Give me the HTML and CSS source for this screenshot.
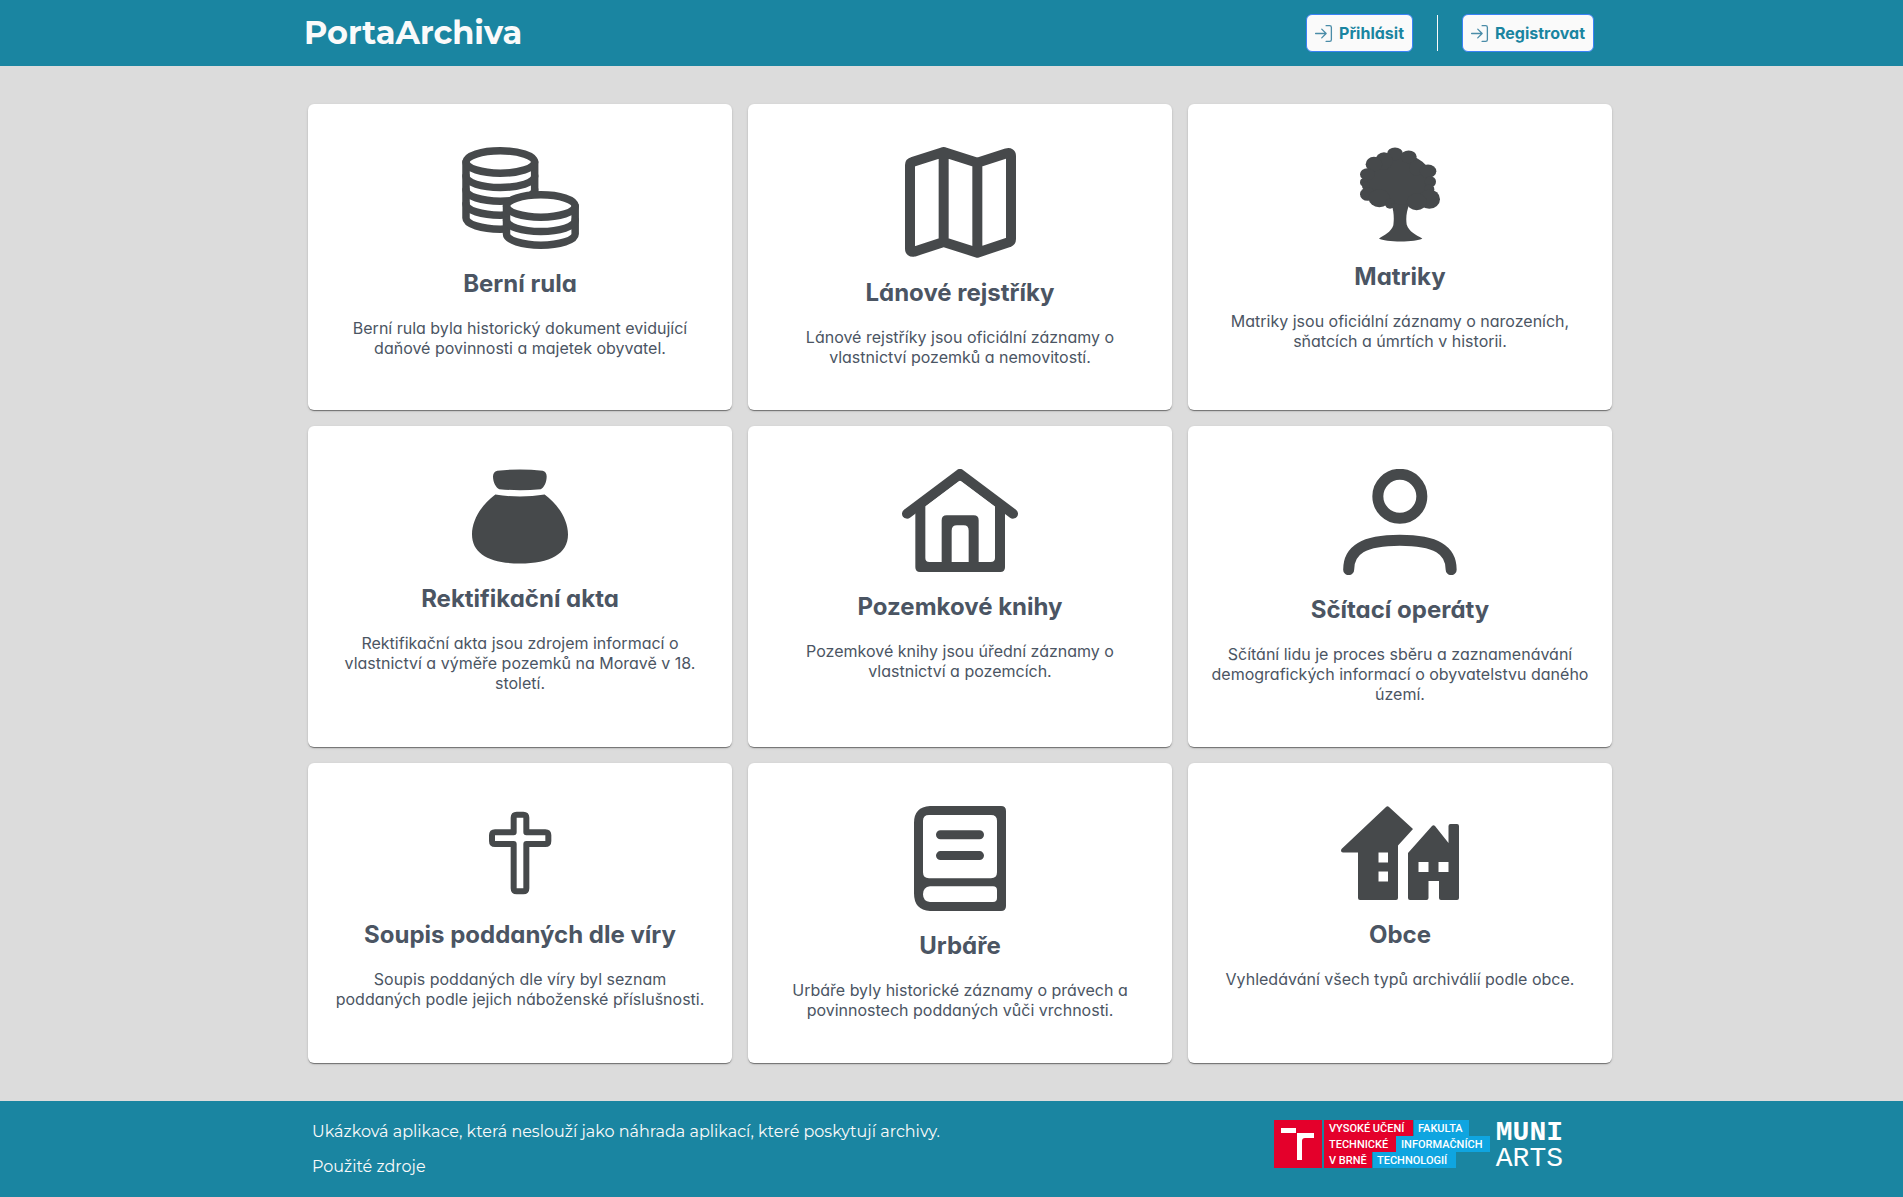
FILE: index.html
```html
<!DOCTYPE html>
<html lang="cs">
<head>
<meta charset="utf-8">
<meta name="viewport" content="width=device-width, initial-scale=1">
<title>PortaArchiva</title>
<link rel="stylesheet" href="styles.css">
</head>
<body>
<header class="header">
  <div class="wrap header-inner">
    <a class="brand" href="#">PortaArchiva</a>
    <nav class="actions">
      <button class="btn" type="button">
        <svg class="btn-icon" viewBox="0 0 24 24" aria-hidden="true"><path d="M15 3h4a2 2 0 0 1 2 2v14a2 2 0 0 1-2 2h-4M10 17l5-5-5-5M15 12H3"/></svg>
        Přihlásit
      </button>
      <span class="divider"></span>
      <button class="btn" type="button">
        <svg class="btn-icon" viewBox="0 0 24 24" aria-hidden="true"><path d="M15 3h4a2 2 0 0 1 2 2v14a2 2 0 0 1-2 2h-4M10 17l5-5-5-5M15 12H3"/></svg>
        Registrovat
      </button>
    </nav>
  </div>
</header>

<main class="wrap main">
  <a class="card" href="#">
    <svg width="117" height="102" viewBox="486 141 350 306" aria-hidden="true">
      <g class="line" stroke-width="22.500">
        <path d="M497.500 186V354A103 33.500 0 0 0 703.500 354V186"/>
        <ellipse cx="600.500" cy="186" rx="103" ry="33.500"/>
        <path d="M497.500 229A103 33.500 0 0 0 703.500 229M497.500 270A103 33.500 0 0 0 703.500 270M497.500 312A103 33.500 0 0 0 703.500 312"/>
        <path class="paper" d="M619 318A103 33.500 0 0 1 825 318V402A103 33.500 0 0 1 619 402Z"/>
        <path d="M619 318A103 33.500 0 0 0 825 318M619 361A103 33.500 0 0 0 825 361"/>
      </g>
    </svg>
    <h2>Berní rula</h2>
    <p>Berní rula byla historický dokument evidující daňové povinnosti a majetek obyvatel.</p>
  </a>
  <a class="card" href="#">
    <svg width="111" height="111" viewBox="495 141 333 333" aria-hidden="true">
      <path class="line" stroke-width="30" d="M510 195Q510 188 517 186L611 156L712 188L800 160Q813 157 813 168V417Q813 424 806 427L712 458L611 426L522 455Q510 457 510 446ZM611 156V426M712 188V458"/>
    </svg>
    <h2>Lánové rejstříky</h2>
    <p>Lánové rejstříky jsou oficiální záznamy o vlastnictví pozemků a nemovitostí.</p>
  </a>
  <a class="card" href="#">
    <svg width="80" height="95" viewBox="540 141 240 282" aria-hidden="true">
      <g class="solid">
        <ellipse cx="655" cy="240" rx="102" ry="80"/>
        <ellipse cx="645" cy="160" rx="24" ry="19"/><ellipse cx="686" cy="169" rx="24" ry="19"/>
        <circle cx="612" cy="181" r="26"/><ellipse cx="582" cy="191" rx="25" ry="22"/>
        <ellipse cx="562" cy="221" rx="22" ry="18"/><circle cx="552" cy="245" r="12"/><circle cx="558" cy="256" r="12"/>
        <ellipse cx="563" cy="281" rx="23" ry="20"/><ellipse cx="598" cy="293" rx="32" ry="27"/>
        <circle cx="630" cy="310" r="15"/><circle cx="710" cy="202" r="23"/>
        <ellipse cx="744" cy="212" rx="25" ry="20"/><circle cx="751" cy="244" r="17"/><circle cx="748" cy="266" r="15"/>
        <ellipse cx="748" cy="296" rx="32" ry="29"/><ellipse cx="710" cy="304" rx="30" ry="25"/>
        <path d="M634 310C643 335 642 360 640 374C633 395 612 404 597 414C615 426 709 426 727 414C706 402 688 395 680 372C677 352 680 330 688 312Z"/>
      </g>
    </svg>
    <h2>Matriky</h2>
    <p>Matriky jsou oficiální záznamy o narozeních, sňatcích a úmrtích v historii.</p>
  </a>
  <a class="card" href="#">
    <svg width="96" height="95" viewBox="516 177 288 282" aria-hidden="true">
      <path class="solid" d="M592 181Q660 173 728 181Q740 185 740 198C740 215 732 232 722 236Q660 242 598 236C588 232 579 215 579 198Q579 185 592 181ZM586 252Q660 264 734 252C775 282 804 328 804 372C804 430 750 459 660 459C570 459 516 430 516 372C516 328 545 282 586 252Z"/>
    </svg>
    <h2>Rektifikační akta</h2>
    <p>Rektifikační akta jsou zdrojem informací o vlastnictví a výměře pozemků na Moravě v 18. století.</p>
  </a>
  <a class="card" href="#">
    <svg width="116" height="103" viewBox="486 177 348 309" aria-hidden="true">
      <path class="line" stroke-width="30" d="M501 311L660 192L819 311"/>
      <path class="solid" fill-rule="evenodd" d="M526 300V472Q526 486 540 486H781Q795 486 795 472V300L660 195ZM556 288V444Q556 456 568 456H605V331Q605 316 620 316H701Q716 316 716 331V456H752Q765 456 765 444V288L668 215Q660 210 652 215ZM635 456V362Q635 346 651 346H671Q686 346 686 362V456Z"/>
    </svg>
    <h2>Pozemkové knihy</h2>
    <p>Pozemkové knihy jsou úřední záznamy o vlastnictví a pozemcích.</p>
  </a>
  <a class="card" href="#">
    <svg width="114" height="106" viewBox="489 177 341 318" aria-hidden="true">
      <g class="line" stroke-width="33">
        <circle cx="659" cy="259" r="66"/>
        <path d="M505.500 479C505.500 420 550 391 659 391C768 391 813 420 813 479"/>
      </g>
    </svg>
    <h2>Sčítací operáty</h2>
    <p>Sčítání lidu je proces sběru a zaznamenávání demografických informací o obyvatelstvu daného území.</p>
  </a>
  <a class="card" href="#">
    <svg width="94" height="94" viewBox="519 168 282 282" aria-hidden="true">
      <path class="line" stroke-width="18" d="M650 194h20q9 0 9 9V247H736q9 0 9 9v17q0 9-9 9H679V415q0 9-9 9h-20q-9 0-9-9V282H585q-9 0-9-9v-17q0-9 9-9H641V203q0-9 9-9z"/>
    </svg>
    <h2>Soupis poddaných dle víry</h2>
    <p>Soupis poddaných dle víry byl seznam poddaných podle jejich náboženské příslušnosti.</p>
  </a>
  <a class="card" href="#">
    <svg width="92" height="105" viewBox="914 806 92 106" preserveAspectRatio="none" aria-hidden="true">
      <path class="solid" fill-rule="evenodd" d="M930 806H1001Q1006 806 1006 811V907Q1006 912 1001 912H930Q914 911 914 894V823Q914 807 930 806ZM929 815H991Q997 815 997 821V873Q997 879 991 879H929Q923 879 923 873V821Q923 815 929 815ZM930 887H993Q997 887 997 891V899Q997 903 993 903H930Q923 902 923 895Q923 888 930 887Z"/>
      <path class="line" stroke-width="9" d="M940.500 835H979.500M940.500 856H979.500"/>
    </svg>
    <h2>Urbáře</h2>
    <p>Urbáře byly historické záznamy o právech a povinnostech poddaných vůči vrchnosti.</p>
  </a>
  <a class="card" href="#">
    <svg width="118" height="94" viewBox="1341 806 118 94" aria-hidden="true">
      <path class="solid" fill-rule="evenodd" d="M1386 807Q1387.500 805.500 1389 807L1413 829L1398 845.500V898Q1398 900 1396 900H1360Q1358 900 1358 898V852.500H1343Q1340 852 1341.500 849ZM1378.500 852.500V862.500H1388V852.500ZM1378.500 871.500V881.500H1388V871.500Z"/>
      <path class="solid" fill-rule="evenodd" d="M1408 853L1432 826Q1433.500 824.500 1435 826L1448.500 843V826Q1448.500 824 1450.500 824H1457Q1459 824 1459 826V898Q1459 900 1457 900H1441Q1439 900 1439 898V881H1428.500V898Q1428.500 900 1426.500 900H1410Q1408 900 1408 898ZM1418.500 862V872H1428.500V862ZM1438.500 862V872H1448.500V862Z"/>
    </svg>
    <h2>Obce</h2>
    <p>Vyhledávání všech typů archiválií podle obce.</p>
  </a>
</main>

<footer class="footer">
  <div class="wrap footer-inner">
    <div class="notes">
      <p>Ukázková aplikace, která neslouží jako náhrada aplikací, které poskytují archivy.</p>
      <a href="#">Použité zdroje</a>
    </div>
    <div class="logos">
      <svg class="vut" width="216" height="48" viewBox="0 0 216 48" role="img" aria-label="Vysoké učení technické v Brně, Fakulta informačních technologií">
        <path fill="#e4002b" d="M0 0h48v48H0zM50 0h89v16H50zM50 16h72v16H50zM50 32h48v16H50z"/>
        <path fill="#0fa5e0" d="M140 0h55v16h-55zM122 16h94v16h-94zM99 32h83v16H99z"/>
        <path fill="#fff" d="M7 8h15v5h18v5h-9q-3 0-3 3v19h-5V13H7z"/>
        <path fill="#e4002b" d="M22 13h1v5h-1z"/>
        <g class="vut-text">
          <text x="55" y="12">VYSOKÉ UČENÍ</text><text x="144" y="12">FAKULTA</text>
          <text x="55" y="28">TECHNICKÉ</text><text x="127" y="28">INFORMAČNÍCH</text>
          <text x="55" y="44">V BRNĚ</text><text x="103" y="44">TECHNOLOGIÍ</text>
        </g>
      </svg>
      <div class="muni"><strong>MUNI</strong><span>ARTS</span></div>
    </div>
  </div>
</footer>
</body>
</html>
```
FILE: styles.css
```css
:root {
  --teal: #1a85a1;
  --ink: #46494b;
  --slate: #4b5563;
  --light: #fafafa;
}

* {
  box-sizing: border-box;
}

body {
  margin: 0;
  min-height: 100vh;
  display: flex;
  flex-direction: column;
  background: #dcdcdc;
  color: var(--slate);
  font: 16px/20px Inter, sans-serif;
}

a {
  color: inherit;
  text-decoration: none;
}

.wrap {
  width: 100%;
  max-width: 1321px;
  margin: 0 auto;
}

.header,
.footer {
  background: var(--teal);
  color: var(--light);
  font-family: Montserrat, Inter, sans-serif;
}

.header-inner {
  display: flex;
  align-items: center;
  justify-content: space-between;
  min-height: 66px;
  padding: 0 18px 0 13px;
}

.brand {
  font-size: 32px;
  line-height: 40px;
  font-weight: 700;
}

.actions {
  display: flex;
  align-items: center;
  gap: 24px;
}

.btn {
  display: flex;
  align-items: center;
  gap: 5px;
  height: 38px;
  padding: 0 8px 0 6px;
  border: 1px solid #3b82f6;
  border-radius: 6px;
  background: var(--light);
  color: var(--teal);
  font: 700 16px/20px Inter, sans-serif;
  font-feature-settings: "cv11";
}

.btn-icon {
  width: 21px;
  height: 21px;
  fill: none;
  stroke: #4a8ca8;
  stroke-width: 1.5;
  stroke-linecap: round;
  stroke-linejoin: round;
}

.divider {
  width: 1px;
  height: 36px;
  background: var(--light);
}

.main {
  flex: 1;
  display: grid;
  grid-template-columns: repeat(3, 1fr);
  align-content: start;
  gap: 16px;
  padding: 38px 0 38px 17px;
  font-feature-settings: "cv11";
}

.card {
  display: flex;
  flex-direction: column;
  align-items: center;
  padding: 43px 23px;
  border-radius: 6px;
  background: #fff;
  box-shadow: 0 2px 1px -1px rgba(0, 0, 0, 0.3), 0 1px 1px rgba(0, 0, 0, 0.2), 0 1px 3px rgba(0, 0, 0, 0.12);
  text-align: center;
}

.card h2 {
  margin: 20px 0;
  font-size: 24px;
  line-height: 29px;
  font-weight: 700;
}

.card p {
  margin: 0;
}

.solid {
  fill: var(--ink);
}

.line {
  fill: none;
  stroke: var(--ink);
  stroke-linecap: round;
  stroke-linejoin: round;
}

.paper {
  fill: #fff;
}

.footer-inner {
  display: flex;
  justify-content: space-between;
  align-items: flex-start;
  min-height: 96px;
  padding: 19px 49px 19px 21px;
}

.notes {
  display: flex;
  flex-direction: column;
  gap: 11px;
  line-height: 24px;
}

.notes p {
  margin: 0;
}

.logos {
  display: flex;
  gap: 6px;
}

.vut-text {
  fill: #fff;
  font: 500 11px Roboto, sans-serif;
}

.muni {
  display: flex;
  flex-direction: column;
  color: #fff;
  font: 28px/26px "Liberation Mono", monospace;
}
```
